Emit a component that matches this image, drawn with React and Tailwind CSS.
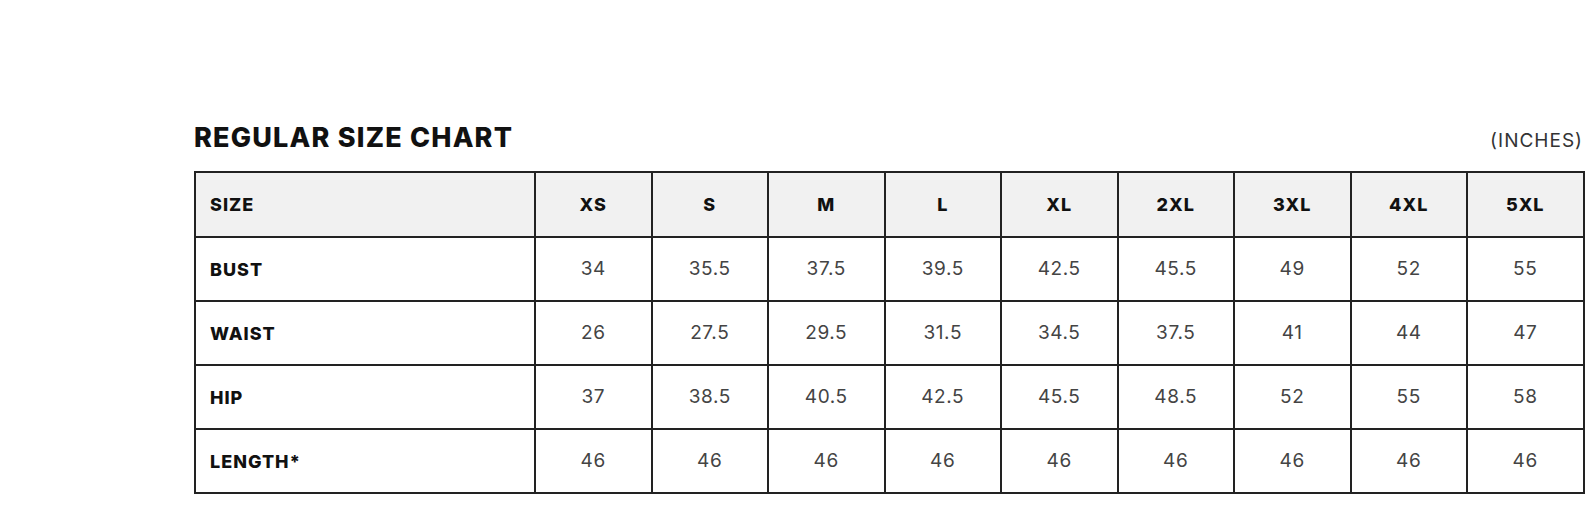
const sizes = ['XS', 'S', 'M', 'L', 'XL', '2XL', '3XL', '4XL', '5XL'];

const rows = [
  { label: 'BUST', values: ['34', '35.5', '37.5', '39.5', '42.5', '45.5', '49', '52', '55'] },
  { label: 'WAIST', values: ['26', '27.5', '29.5', '31.5', '34.5', '37.5', '41', '44', '47'] },
  { label: 'HIP', values: ['37', '38.5', '40.5', '42.5', '45.5', '48.5', '52', '55', '58'] },
  { label: 'LENGTH*', values: ['46', '46', '46', '46', '46', '46', '46', '46', '46'] },
];

const SizeChart = () => {
  return (
    <div className="w-[1588px] h-[518px] bg-white pt-[118px] pl-[194px] pr-[5px] font-['Inter',sans-serif]">
      <div className="flex items-end justify-between h-[36px] mb-[17px]">
        <h2 className="text-[27px] leading-[32px] font-extrabold text-[#111] tracking-[1.2px]">REGULAR SIZE CHART</h2>
        <span className="text-[19px] leading-[24px] text-[#333] mb-[1px] tracking-[1px]">(INCHES)</span>
      </div>

      <table className="border-collapse table-fixed w-[1389px]">
        <colgroup>
          <col className="w-[340px]" />
          {sizes.map((s) => (
            <col key={s} className="w-[116.5px]" />
          ))}
        </colgroup>
        <thead>
          <tr className="h-[65px] bg-[#f1f1f1]">
            <th className="border-2 border-[#222] text-left pl-[14px] text-[18px] font-extrabold text-[#111] tracking-[1px]">SIZE</th>
            {sizes.map((s) => (
              <th key={s} className="border-2 border-[#222] text-center text-[18px] font-extrabold text-[#111] tracking-[1px]">{s}</th>
            ))}
          </tr>
        </thead>
        <tbody>
          {rows.map((row) => (
            <tr key={row.label} className="h-[64px]">
              <td className="border-2 border-[#222] text-left pl-[14px] text-[18px] font-extrabold text-[#111] tracking-[1px]">{row.label}</td>
              {row.values.map((v, i) => (
                <td key={i} className="border-2 border-[#222] text-center text-[19px] text-[#444] tracking-[0.6px]">{v}</td>
              ))}
            </tr>
          ))}
        </tbody>
      </table>
    </div>
  )
}

export default SizeChart
